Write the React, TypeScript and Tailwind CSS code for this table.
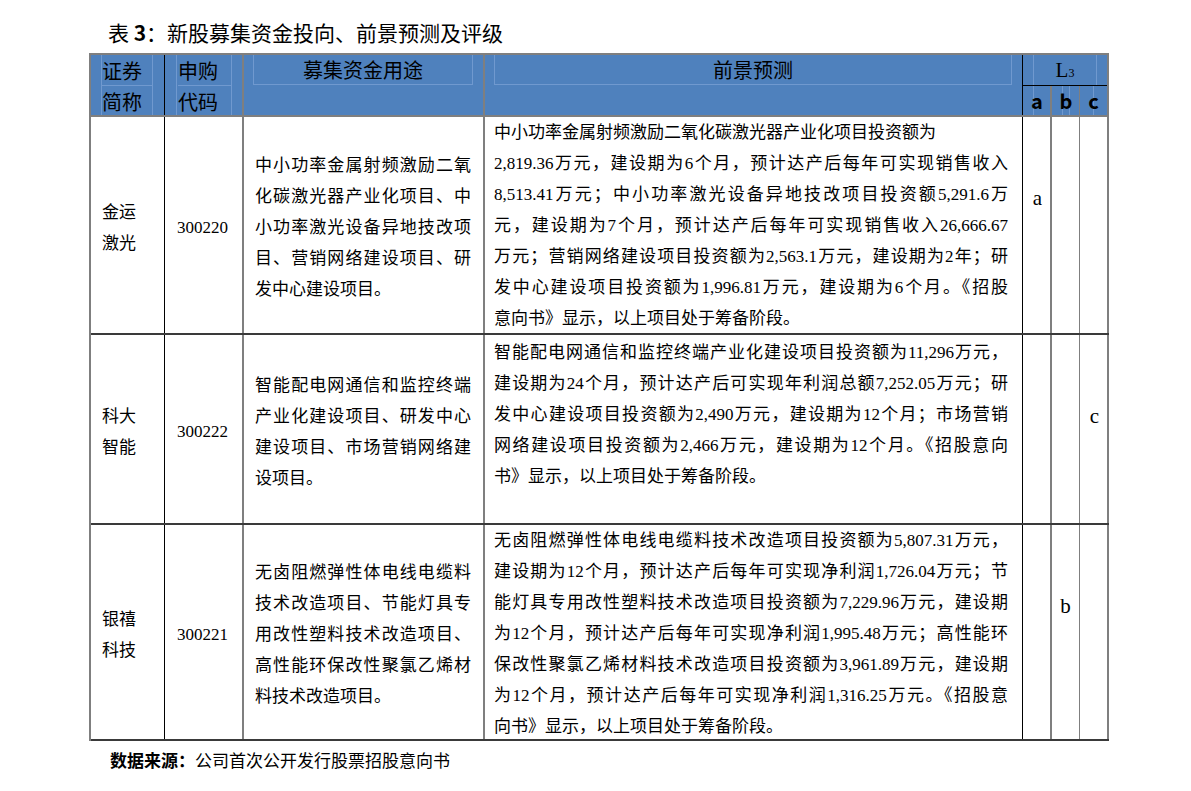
import React from "react";

const serif = "font-['Liberation_Serif','Noto_Sans_CJK_SC',serif]";
const sans = "font-['Noto_Sans_CJK_SC','Noto_Sans',sans-serif]";

type Row = {
  name: string[];
  code: string;
  purpose: string[];
  prospect: string[];
  leftLines: number[];
  rating: "a" | "b" | "c";
  h: string;
  pt: string;
};

const rows: Row[] = [
  {
    name: ["金运", "激光"],
    code: "300220",
    purpose: [
      "中小功率金属射频激励二氧",
      "化碳激光器产业化项目、中",
      "小功率激光设备异地技改项",
      "目、营销网络建设项目、研",
      "发中心建设项目。",
    ],
    prospect: [
      "中小功率金属射频激励二氧化碳激光器产业化项目投资额为",
      "2,819.36万元，建设期为6个月，预计达产后每年可实现销售收入",
      "8,513.41万元；中小功率激光设备异地技改项目投资额5,291.6万",
      "元，建设期为7个月，预计达产后每年可实现销售收入26,666.67",
      "万元；营销网络建设项目投资额为2,563.1万元，建设期为2年；研",
      "发中心建设项目投资额为1,996.81万元，建设期为6个月。《招股",
      "意向书》显示，以上项目处于筹备阶段。",
    ],
    leftLines: [0],
    rating: "a",
    h: "h-[216px]",
    pt: "pt-0",
  },
  {
    name: ["科大", "智能"],
    code: "300222",
    purpose: [
      "智能配电网通信和监控终端",
      "产业化建设项目、研发中心",
      "建设项目、市场营销网络建",
      "设项目。",
    ],
    prospect: [
      "智能配电网通信和监控终端产业化建设项目投资额为11,296万元，",
      "建设期为24个月，预计达产后可实现年利润总额7,252.05万元；研",
      "发中心建设项目投资额为2,490万元，建设期为12个月；市场营销",
      "网络建设项目投资额为2,466万元，建设期为12个月。《招股意向",
      "书》显示，以上项目处于筹备阶段。",
    ],
    leftLines: [],
    rating: "c",
    h: "h-[188px]",
    pt: "pt-[2px]",
  },
  {
    name: ["银禧", "科技"],
    code: "300221",
    purpose: [
      "无卤阻燃弹性体电线电缆料",
      "技术改造项目、节能灯具专",
      "用改性塑料技术改造项目、",
      "高性能环保改性聚氯乙烯材",
      "料技术改造项目。",
    ],
    prospect: [
      "无卤阻燃弹性体电线电缆料技术改造项目投资额为5,807.31万元，",
      "建设期为12个月，预计达产后每年可实现净利润1,726.04万元；节",
      "能灯具专用改性塑料技术改造项目投资额为7,229.96万元，建设期",
      "为12个月，预计达产后每年可实现净利润1,995.48万元；高性能环",
      "保改性聚氯乙烯材料技术改造项目投资额为3,961.89万元，建设期",
      "为12个月，预计达产后每年可实现净利润1,316.25万元。《招股意",
      "向书》显示，以上项目处于筹备阶段。",
    ],
    leftLines: [],
    rating: "b",
    h: "h-[214px]",
    pt: "pt-0",
  },
];

function Lines({ lines, left = [] }: { lines: string[]; left?: number[] }) {
  return (
    <>
      {lines.map((l, i) => (
        <div
          key={i}
          className={
            i < lines.length - 1 && !left.includes(i)
              ? "text-justify [text-align-last:justify]"
              : "text-left"
          }
        >
          {l}
        </div>
      ))}
    </>
  );
}

function Header() {
  return (
    <div className="flex h-[62px] bg-[#4f81bd] border-b-2 border-[#7f7f7f] text-black">
      <div className="w-[74px] h-full border-r border-black shrink-0">
        <div className={`ml-[10px] w-[52px] h-full border-x border-[#7099cf] ${sans} text-[20px] leading-[31px]`}>
          <div className="h-[31px] border-b border-[#7099cf]">证券</div>
          <div>简称</div>
        </div>
      </div>
      <div className="w-[79px] h-full border-r-2 border-[#7f7f7f] shrink-0">
        <div className={`ml-[11px] w-[56px] h-full border-x border-[#7099cf] pl-[1px] ${sans} text-[20px] leading-[31px]`}>
          <div className="h-[31px] border-b border-[#7099cf]">申购</div>
          <div>代码</div>
        </div>
      </div>
      <div className="w-[241px] h-full border-r-2 border-[#7f7f7f] shrink-0">
        <div className={`ml-[9px] w-[220px] h-[30px] border-x border-b border-[#7099cf] text-center ${sans} text-[20px] leading-[30px]`}>
          募集资金用途
        </div>
      </div>
      <div className="w-[538px] h-full border-r border-black shrink-0">
        <div className={`ml-[9px] w-[518px] h-[30px] border-x border-b border-[#7099cf] text-center ${sans} text-[20px] leading-[30px]`}>
          前景预测
        </div>
      </div>
      <div className="w-[86px] h-full border-r-2 border-[#7f7f7f] shrink-0 flex flex-col">
        <div className="h-[32px] border-b border-black flex">
          <div className="ml-[10px] w-[64px] h-full border-x border-[#7099cf] flex items-center justify-center">
            <span className={`${serif} text-[21px] leading-none`}>
              L<span className="text-[12px]">3</span>
            </span>
          </div>
        </div>
        <div className={`flex flex-1 ${sans} font-bold text-[20px] leading-[29px]`}>
          <div className="w-[29px] border-r-2 border-[#7f7f7f] flex">
            <div className="ml-[10px] h-full border-l border-[#7099cf]" />
            <div className="-ml-[10px] w-full text-center">a</div>
          </div>
          <div className="w-[28px] border-r border-[#7f7f7f] flex">
            <div className="ml-[10px] h-full border-l border-[#7099cf]" />
            <div className="ml-[6px] h-full border-l border-[#7099cf]" />
            <div className="-ml-[17px] w-full text-center">b</div>
          </div>
          <div className="w-[27px] flex">
            <div className="ml-[13px] h-full border-l border-[#7099cf]" />
            <div className="-ml-[14px] w-full text-center">c</div>
          </div>
        </div>
      </div>
    </div>
  );
}

function DataRow({ r }: { r: Row }) {
  return (
    <div className={`flex ${r.h} box-content border-b-2 border-[#3a3a3a] text-black ${serif}`}>
      <div className="w-[74px] shrink-0 border-r border-black flex flex-col justify-center pl-[11px] pt-[5px] text-[17px] leading-[31px]">
        {r.name.map((n, i) => (
          <div key={i}>{n}</div>
        ))}
      </div>
      <div className="w-[79px] shrink-0 border-r-2 border-[#7f7f7f] flex items-center justify-center pr-[2px] pt-[5px] text-[17px]">
        {r.code}
      </div>
      <div className="w-[241px] shrink-0 border-r-2 border-[#7f7f7f] flex flex-col justify-center pl-[11px] pt-[5px] text-[17px] leading-[31px]">
        <div className="w-[216px]">
          <Lines lines={r.purpose} />
        </div>
      </div>
      <div className={`w-[538px] shrink-0 border-r border-black pl-[9px] ${r.pt} text-[17px] leading-[31px]`}>
        <div className="w-[514px]">
          <Lines lines={r.prospect} left={r.leftLines} />
        </div>
      </div>
      <div className="w-[29px] shrink-0 border-r-2 border-[#7f7f7f] pt-[66px] text-center text-[21px] leading-[31px] pl-[2px]">
        {r.rating === "a" ? "a" : ""}
      </div>
      <div className="w-[28px] shrink-0 border-r border-[#7f7f7f] pt-[66px] text-center text-[21px] leading-[31px]">
        {r.rating === "b" ? "b" : ""}
      </div>
      <div className="w-[29px] shrink-0 border-r-2 border-[#7f7f7f] pt-[66px] text-center text-[21px] leading-[31px] pl-[2px]">
        {r.rating === "c" ? "c" : ""}
      </div>
    </div>
  );
}

export default function App() {
  return (
    <div className="w-[1191px] h-[791px] bg-white pt-[17px] pl-[89px] overflow-hidden">
      <div className={`pl-[19px] h-[30px] leading-[30px] text-[21px] text-black ${sans}`}>
        表 <span className="font-bold">3</span>：新股募集资金投向、前景预测及评级
      </div>
      <div className="mt-[6px] w-[1020px] border-t-2 border-l-2 border-[#7f7f7f]">
        <Header />
        {rows.map((r, i) => (
          <DataRow key={i} r={r} />
        ))}
      </div>
      <div className="pl-[21px] mt-[4px] h-[30px] leading-[30px] text-[17px] text-black">
        <span className={`${sans} font-bold`}>数据来源：</span>
        <span className={serif}>公司首次公开发行股票招股意向书</span>
      </div>
    </div>
  );
}
